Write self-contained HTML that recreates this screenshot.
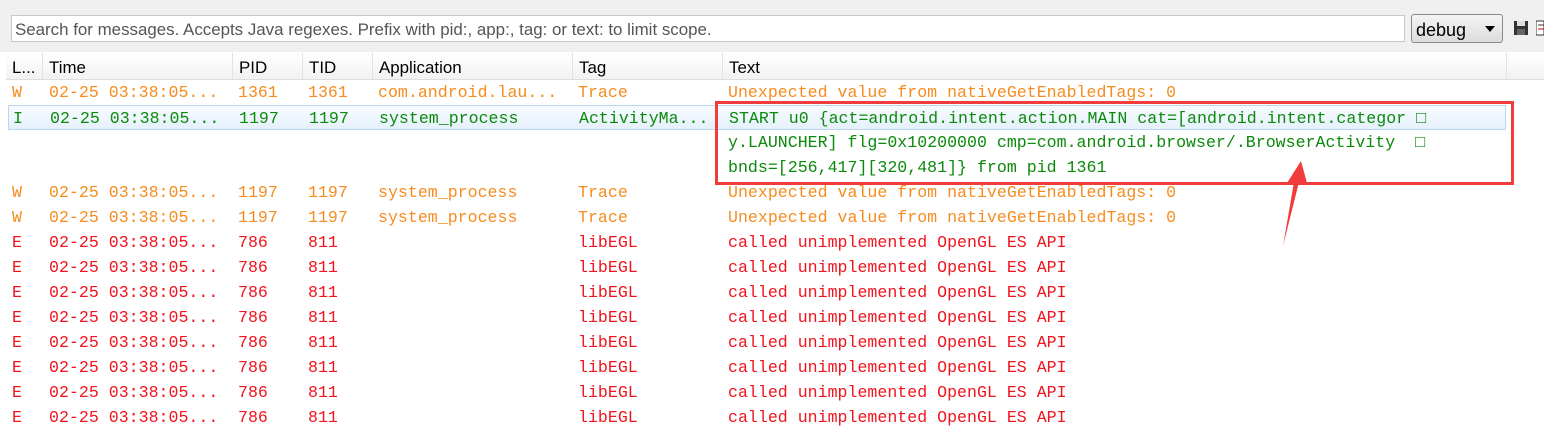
<!DOCTYPE html>
<html><head><meta charset="utf-8"><style>
body{margin:0;width:1544px;height:434px;background:#fff;position:relative;overflow:hidden;font-family:"Liberation Sans",sans-serif}
.top{position:absolute;left:0;top:0;width:1544px;height:52px;background:#f0f0f0}
.search{position:absolute;left:11px;top:15px;width:1394px;height:27px;background:#fff;border:1px solid #c8c8c8;box-sizing:border-box;font-size:16.9px;color:#555;line-height:28px;padding-left:3px}
.dd{position:absolute;left:1411px;top:14px;width:92px;height:29px;border:1px solid #8a8a8a;border-radius:3px;background:linear-gradient(#f4f4f4,#dcdcdc);box-sizing:border-box;font-size:18px;line-height:30px;padding-left:4px;color:#000}
.dd:after{content:"";position:absolute;right:7px;top:11px;border:5px solid transparent;border-top:6px solid #000;border-bottom:0}
.hdr{position:absolute;left:6px;top:53px;width:1538px;height:26px;background:linear-gradient(#fff,#f2f2f2);border-bottom:1px solid #ddd;font-size:16.9px;line-height:29px}
.hdr span{position:absolute;top:0;height:26px;border-left:1px solid #e2e2e2;padding-left:6px}
.row{position:absolute;left:6px;height:25px;width:1500px;font-family:"Liberation Mono",monospace;font-size:16.6px;line-height:26px;white-space:pre}
.row span{position:absolute;top:0}
.W{color:#f68c1f}.E{color:#f0141e}.I{color:#0c8a0c}
.sel{background:linear-gradient(#f7fbff,#e6f1fc);border:1px solid #b9d6f5;box-sizing:border-box;left:8px;width:1498px}
</style></head><body>
<div class="top"></div>
<div class="search">Search for messages. Accepts Java regexes. Prefix with pid:, app:, tag: or text: to limit scope.</div>
<div class="dd">debug</div>
<svg style="position:absolute;left:1513px;top:20px" width="16" height="16" viewBox="0 0 16 16"><rect x="1" y="1" width="14" height="14" fill="#333"/><rect x="4" y="1" width="8" height="5" fill="#ddd"/><rect x="4" y="9" width="8" height="6" fill="#666"/></svg>
<svg style="position:absolute;left:1536px;top:20px" width="8" height="16"><rect x="0" y="1" width="8" height="14" fill="#fff" stroke="#333"/><line x1="2" y1="5" x2="8" y2="5" stroke="#333"/><line x1="2" y1="9" x2="8" y2="9" stroke="#c00"/></svg>
<div class="hdr">
<span style="left:0;border:0">L...</span><span style="left:36px">Time</span><span style="left:226px">PID</span><span style="left:296px">TID</span><span style="left:366px">Application</span><span style="left:566px">Tag</span><span style="left:716px">Text</span><span style="left:1500px;width:40px"></span>
</div>
<div id="rows"></div>
<div class="row W" style="top:80px"><span style="left:6px">W</span><span style="left:43px">02-25 03:38:05...</span><span style="left:232px">1361</span><span style="left:302px">1361</span><span style="left:372px">com.android.lau...</span><span style="left:572px">Trace</span><span style="left:722px">Unexpected value from nativeGetEnabledTags: 0</span></div>
<div class="row sel I" style="top:105px"><span style="left:4px">I</span><span style="left:41px">02-25 03:38:05...</span><span style="left:230px">1197</span><span style="left:300px">1197</span><span style="left:370px">system_process</span><span style="left:570px">ActivityMa...</span><span style="left:720px">START u0 {act=android.intent.action.MAIN cat=[android.intent.categor □</span></div>
<div class="row I" style="top:130px"><span style="left:722px">y.LAUNCHER] flg=0x10200000 cmp=com.android.browser/.BrowserActivity  □</span></div>
<div class="row I" style="top:155px"><span style="left:722px">bnds=[256,417][320,481]} from pid 1361</span></div>
<div class="row W" style="top:180px"><span style="left:6px">W</span><span style="left:43px">02-25 03:38:05...</span><span style="left:232px">1197</span><span style="left:302px">1197</span><span style="left:372px">system_process</span><span style="left:572px">Trace</span><span style="left:722px">Unexpected value from nativeGetEnabledTags: 0</span></div>
<div class="row W" style="top:205px"><span style="left:6px">W</span><span style="left:43px">02-25 03:38:05...</span><span style="left:232px">1197</span><span style="left:302px">1197</span><span style="left:372px">system_process</span><span style="left:572px">Trace</span><span style="left:722px">Unexpected value from nativeGetEnabledTags: 0</span></div>
<script>
var h='';for(var i=0;i<8;i++){h+='<div class="row E" style="top:'+(230+25*i)+'px"><span style="left:6px">E</span><span style="left:43px">02-25 03:38:05...</span><span style="left:232px">786</span><span style="left:302px">811</span><span style="left:572px">libEGL</span><span style="left:722px">called unimplemented OpenGL ES API</span></div>';}
document.getElementById('rows').innerHTML=h;
</script>
<div style="position:absolute;left:715px;top:101px;width:799px;height:84px;border:3px solid #f03c3c;box-sizing:border-box"></div>
<svg style="position:absolute;left:0;top:0" width="1544" height="434"><polygon points="1301,161 1307,183 1299,182 1283,246 1294,182 1287,183" fill="#f03c3c"/></svg>
</body></html>
